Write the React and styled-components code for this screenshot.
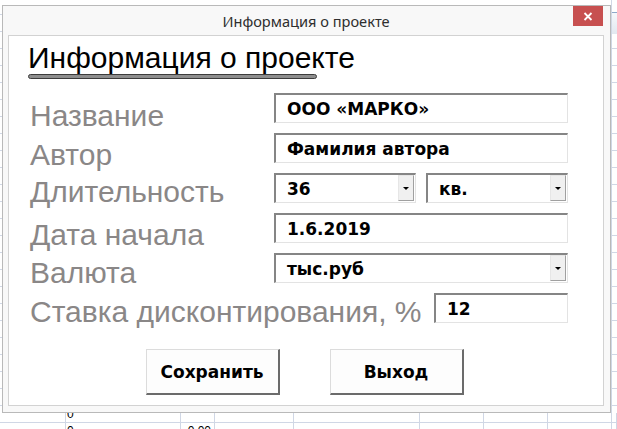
import React from 'react';
import styled, { createGlobalStyle } from 'styled-components';

const GlobalStyle = createGlobalStyle`
  html, body {
    margin: 0;
    padding: 0;
    background: #fff;
  }
  body {
    font-family: "Liberation Sans", Arial, sans-serif;
  }
`;

const gridLine = '#d0d7e5';

const Page = styled.div`
  width: 617px;
  height: 429px;
  overflow: hidden;
  display: flex;
  flex-direction: column;
  background: #fff;
`;

const TopRow = styled.div`
  display: flex;
  height: 413px;
  flex-shrink: 0;
`;

const Gutter = styled.div`
  width: ${p => p.$width || 'auto'};
  flex: ${p => (p.$grow ? 1 : 'none')};
  border-left: ${p => (p.$line ? `1px solid ${gridLine}` : 'none')};
  background: repeating-linear-gradient(to bottom, #fff 0 16px, ${gridLine} 16px 17px);
  background-position: 0 -2px;
`;

const GutterHeader = styled.div`
  margin-top: 12px;
  height: 21px;
  border-top: 1px solid #8ea8c8;
  background: linear-gradient(#f5f8fb, #e2e8f0);
`;

const Window = styled.div`
  box-sizing: border-box;
  width: 609px;
  height: 408px;
  margin-top: 5px;
  border: 1px solid #b9b9b9;
  background: #f8f8f8;
  padding: 0 6px 6px 5px;
  display: flex;
  flex-direction: column;
`;

const TitleBar = styled.div`
  height: 29px;
  display: grid;
  grid-template-columns: 1fr auto 1fr;
  align-items: center;
`;

const TitleText = styled.div`
  grid-column: 2;
  font-family: "Noto Sans", "Open Sans", sans-serif;
  font-size: 14.6px;
  color: #2e2e2e;
  padding-top: 1px;
`;

const CloseButton = styled.div`
  grid-column: 3;
  justify-self: end;
  align-self: start;
  width: 30px;
  height: 20px;
  margin-right: 1px;
  background: #c75050;
  display: flex;
  align-items: center;
  justify-content: center;
`;

const Client = styled.div`
  flex: 1;
  border: 1px solid #d2d2d2;
  background: #fff;
  padding: 0 35px 0 21px;
  display: flex;
  flex-direction: column;
`;

const Heading = styled.h1`
  margin: 6px 0 0 -2px;
  font-size: 30px;
  line-height: 31px;
  font-weight: normal;
  color: #000;
`;

const Underline = styled.div`
  box-sizing: border-box;
  width: 289px;
  height: 5px;
  margin: 1px 0 0 -2px;
  border: 1px solid #3c3c3c;
  background: #8e8e8e;
  border-radius: 3px;
`;

const Form = styled.div`
  margin-top: 14px;
  display: flex;
  flex-direction: column;
  gap: 10px;
`;

const Row = styled.div`
  display: flex;
  justify-content: space-between;
  align-items: flex-start;
  height: 30px;
`;

const Label = styled.div`
  padding-top: ${p => p.$drop || 0}px;
  font-size: 30px;
  line-height: 30px;
  color: #8a8787;
  white-space: nowrap;
`;

const Fields = styled.div`
  display: flex;
  gap: 10px;
  width: ${p => p.$width}px;
`;

const Box = styled.div`
  box-sizing: border-box;
  flex: 1;
  height: 30px;
  border-style: solid;
  border-width: 2px 1px 1px 2px;
  border-color: #858585 #e3e3e3 #e3e3e3 #858585;
  background: #fff;
  display: flex;
  align-items: stretch;
`;

const Value = styled.div`
  flex: 1;
  padding-left: 11px;
  display: flex;
  align-items: center;
  font-family: "DejaVu Sans", Verdana, sans-serif;
  font-weight: bold;
  font-size: 17px;
  color: #000;
  white-space: nowrap;
`;

const DropButton = styled.div`
  box-sizing: border-box;
  width: 16px;
  margin: 0 1px 1px 0;
  background: #f0f0f0;
  border-style: solid;
  border-width: 1px;
  border-color: #e6e6e6 #a0a0a0 #a0a0a0 #e6e6e6;
  display: flex;
  align-items: center;
  justify-content: center;

  &::after {
    content: '';
    border-top: 3px solid #000;
    border-left: 3px solid transparent;
    border-right: 3px solid transparent;
    margin-top: 1px;
  }
`;

const Buttons = styled.div`
  margin-top: 26px;
  display: flex;
  justify-content: center;
  gap: 50px;
  padding-left: 11px;
`;

const Button = styled.button`
  box-sizing: border-box;
  width: 134px;
  height: 46px;
  padding: 0;
  background: #fdfdfd;
  border-style: solid;
  border-width: 1px 2px 2px 1px;
  border-color: #dcdcdc #6b6b6b #6b6b6b #dcdcdc;
  font-family: "DejaVu Sans", Verdana, sans-serif;
  font-weight: bold;
  font-size: 17px;
  color: #000;
`;

const SheetRow = styled.div`
  display: flex;
  height: ${p => p.$height}px;
  border-bottom: 1px solid ${gridLine};
  flex-shrink: 0;
`;

const Cell = styled.div`
  box-sizing: border-box;
  width: ${p => (p.$width ? `${p.$width}px` : 'auto')};
  flex: ${p => (p.$width ? 'none' : 1)};
  border-right: 1px solid ${gridLine};
  overflow: hidden;
  display: flex;
  align-items: flex-end;
  justify-content: ${p => (p.$right ? 'flex-end' : 'flex-start')};
  padding: 0 3px 2px 1px;
  font-size: 12px;
  line-height: 12px;
  color: #000;
`;

const columns = [66, 115, 34, 79, 126, 64, 64, 64, 0];

const SheetCells = ({ values }) => (
  <>
    {columns.map((w, i) => (
      <Cell key={i} $width={w || undefined} $right={i === 2}>
        {values[i] || ''}
      </Cell>
    ))}
  </>
);

const fields = [
  { label: 'Название', drop: 8, value: 'ООО «МАРКО»' },
  { label: 'Автор', drop: 7, value: 'Фамилия автора' },
  { label: 'Длительность', drop: 4, combos: ['36', 'кв.'] },
  { label: 'Дата начала', drop: 7, value: '1.6.2019' },
  { label: 'Валюта', drop: 5, combos: ['тыс.руб'] },
];

export default function App() {
  return (
    <Page>
      <GlobalStyle />
      <TopRow>
        <Gutter $width="2px" />
        <Window>
          <TitleBar>
            <TitleText>Информация о проекте</TitleText>
            <CloseButton>
              <svg width="10" height="9" viewBox="0 0 10 9">
                <path d="M1.5 1 L8.5 8 M8.5 1 L1.5 8" stroke="#fff" strokeWidth="1.8" />
              </svg>
            </CloseButton>
          </TitleBar>
          <Client>
            <Heading>Информация о проекте</Heading>
            <Underline />
            <Form>
              {fields.map(f => (
                <Row key={f.label}>
                  <Label $drop={f.drop}>{f.label}</Label>
                  <Fields $width={294}>
                    {f.combos
                      ? f.combos.map(c => (
                          <Box key={c}>
                            <Value>{c}</Value>
                            <DropButton />
                          </Box>
                        ))
                      : (
                        <Box>
                          <Value>{f.value}</Value>
                        </Box>
                      )}
                  </Fields>
                </Row>
              ))}
              <Row>
                <Label $drop={4}>Ставка дисконтирования, %</Label>
                <Fields $width={134}>
                  <Box>
                    <Value>12</Value>
                  </Box>
                </Fields>
              </Row>
            </Form>
            <Buttons>
              <Button>Сохранить</Button>
              <Button>Выход</Button>
            </Buttons>
          </Client>
        </Window>
        <Gutter $grow $line>
          <GutterHeader />
        </Gutter>
      </TopRow>
      <SheetRow $height={9}>
        <SheetCells values={['', '0']} />
      </SheetRow>
      <SheetRow $height={16}>
        <SheetCells values={['', '0', '0.00']} />
      </SheetRow>
    </Page>
  );
}
